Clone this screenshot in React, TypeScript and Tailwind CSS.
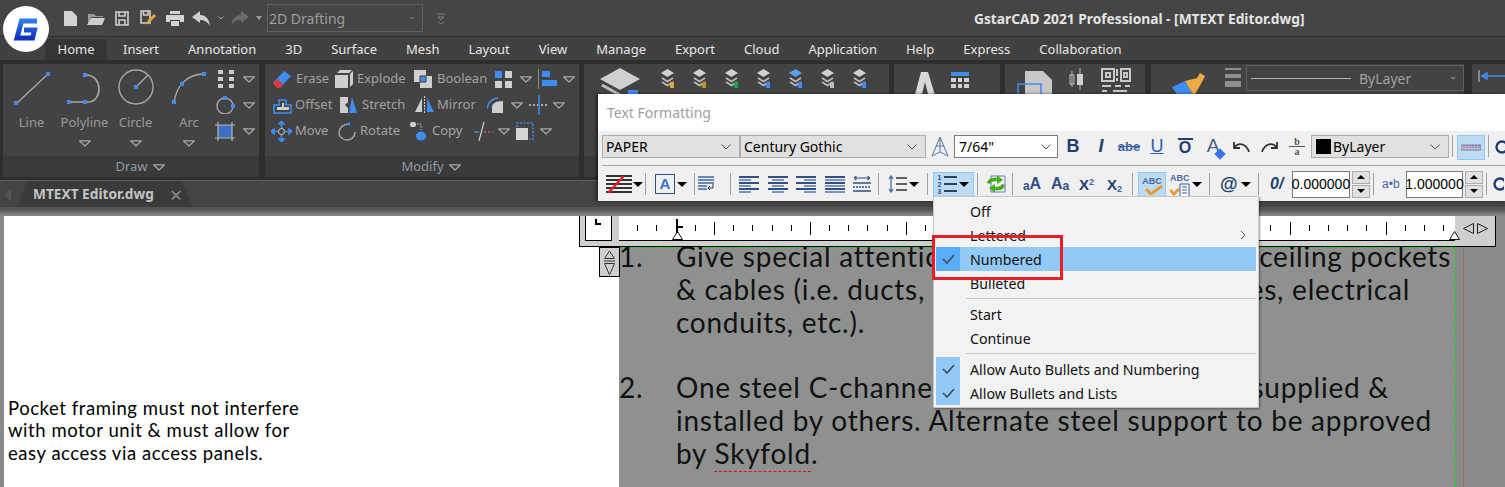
import type { ReactNode } from "react";

const uiFont = "font-['Noto_Sans',sans-serif]";
const gothic = "font-['Lato',sans-serif]";

const RIBBON_TABS = [
  "Insert",
  "Annotation",
  "3D",
  "Surface",
  "Mesh",
  "Layout",
  "View",
  "Manage",
  "Export",
  "Cloud",
  "Application",
  "Help",
  "Express",
  "Collaboration",
];

function Ico({ w, h, children, className = "" }: { w: number; h: number; children: ReactNode; className?: string }) {
  return (
    <svg width={w} height={h} viewBox={`0 0 ${w} ${h}`} className={`shrink-0 ${className}`} fill="none">
      {children}
    </svg>
  );
}

function Chev({ className = "" }: { className?: string }) {
  return (
    <Ico w={12} h={7} className={className}>
      <path d="M0.5 0.8H11.5L6 6Z" stroke="#a8a8a8" strokeWidth="1.2" strokeLinejoin="round" />
    </Ico>
  );
}

function Caret() {
  return (
    <div className="flex w-[10px] shrink-0 justify-center">
      <div className="h-0 w-0 border-x-[5px] border-t-[5px] border-x-transparent border-t-black" />
    </div>
  );
}

function Sep() {
  return <div className="h-[22px] w-px shrink-0 bg-[#a0a0a0]" />;
}

function Dot({ x, y }: { x: number; y: number }) {
  return <rect x={x - 2} y={y - 2} width="4" height="4" fill="#3f8cf2" />;
}

// toolbar icon that runs off the right edge of the window
function CutIcon({ className }: { className: string }) {
  return (
    <Ico w={12} h={16} className={className}>
      <circle cx="8" cy="8" r="5.5" stroke="#1f3f70" strokeWidth="2.4" />
    </Ico>
  );
}

function Logo() {
  return (
    <div className="absolute left-[3px] top-[6px] flex h-[46px] w-[46px] items-center justify-center rounded-full bg-white">
      <Ico w={26} h={25}>
        <defs>
          <linearGradient id="logo" x1="0" y1="0" x2="0" y2="1">
            <stop offset="0" stopColor="#2f7bea" />
            <stop offset="1" stopColor="#1230c4" />
          </linearGradient>
        </defs>
        <path d="M24 4H8.5L4 21H19.5L21.5 13H11" stroke="url(#logo)" strokeWidth="5" />
      </Ico>
    </div>
  );
}

function QuickAccess() {
  return (
    <div className="flex h-full items-center pl-[64px]">
      <Ico w={13} h={15}>
        <path d="M0 0H8L13 5V15H0Z" fill="#d2d2d2" />
      </Ico>
      <Ico w={18} h={13} className="ml-[10px]">
        <path d="M1 2H7L9 4H16V5H4L1 12Z" fill="#9a9a9a" />
        <path d="M4 6H18L15 13H0Z" fill="#cfcfcf" />
      </Ico>
      <Ico w={14} h={15} className="ml-[10px]">
        <path d="M1 1H13V14H1Z M4 1V5H10V1 M4 14V9H10V14" stroke="#cfcfcf" strokeWidth="1.6" />
      </Ico>
      <Ico w={17} h={17} className="ml-[11px]">
        <path d="M1 1H10V13H1Z M3.5 1V5H8V1" stroke="#cfcfcf" strokeWidth="1.6" />
        <path d="M6 15L8 10L14 4L16 6L10 12Z" fill="#f0a63a" />
      </Ico>
      <Ico w={18} h={15} className="ml-[9px]">
        <path d="M4 0H14V3H4Z M0 4H18V11H14V9H4V11H0Z M5 10H13V15H5Z" fill="#d2d2d2" />
      </Ico>
      <Ico w={18} h={15} className="ml-[8px]">
        <path d="M0 6L8 0V4C14 4 17 8 18 15C15 10 12 9 8 9V12Z" fill="#cfcfcf" />
      </Ico>
      <Ico w={6} h={4} className="ml-[8px]">
        <path d="M0.5 0.5L3 3L5.5 0.5" stroke="#a0a0a0" />
      </Ico>
      <Ico w={18} h={15} className="ml-[7px]">
        <path d="M18 6L10 0V4C4 4 1 8 0 15C3 10 6 9 10 9V12Z" fill="#6a6a6a" />
      </Ico>
      <Ico w={6} h={4} className="ml-[7px]">
        <path d="M0 0H6L3 4Z" fill="#a0a0a0" />
      </Ico>
      <div className="ml-[5px] flex h-[28px] w-[156px] items-center justify-between border border-[#5f5f5f] pl-[1px] pr-[7px] text-[14px] text-[#9d9d9d]">
        <span>2D Drafting</span>
        <div className="h-0 w-0 border-x-[3px] border-t-[3px] border-x-transparent border-t-[#666]" />
      </div>
      <Ico w={8} h={11} className="ml-[14px]">
        <path d="M0 1H8 M1 4H7L4 7Z M1 9L4 11L7 9" stroke="#808080" />
      </Ico>
    </div>
  );
}

function Panel({ className, label, children }: { className: string; label?: ReactNode; children?: ReactNode }) {
  return (
    <div className={`flex h-[113px] shrink-0 flex-col overflow-hidden bg-[#434343] ${className}`}>
      <div className="flex-1">{children}</div>
      <div className="flex h-[21px] items-center justify-center gap-[5px] bg-[#3a3a3a] pl-[18px] pt-px text-[13px] text-[#8f9aa3]">
        {label}
      </div>
    </div>
  );
}

function DrawPanel() {
  return (
    <Panel
      className="ml-[3px] w-[256px]"
      label={
        <>
          Draw
          <Chev />
        </>
      }
    >
      <div className="flex">
        <div className="grid w-[212px] grid-cols-4 text-center text-[13px] leading-[19px] text-[#9a9a9a]">
          <div className="flex flex-col items-center pl-[4px]">
            <Ico w={38} h={34} className="mt-[7px]">
              <path d="M4 32L35 3" stroke="#a8a8a8" strokeWidth="1.4" />
              <Dot x={3} y={32} />
              <Dot x={35} y={3} />
            </Ico>
            <span className="mt-[8px]">Line</span>
          </div>
          <div className="flex flex-col items-center pl-[4px]">
            <Ico w={38} h={34} className="mt-[7px]">
              <path d="M2 31H22C37 31 37 4 20 4" stroke="#a8a8a8" strokeWidth="1.6" />
              <Dot x={3} y={31} />
              <Dot x={19} y={31} />
              <Dot x={19} y={4} />
            </Ico>
            <span className="mt-[8px]">Polyline</span>
            <Chev className="mt-[8px]" />
          </div>
          <div className="flex flex-col items-center">
            <Ico w={38} h={36} className="mt-[5px]">
              <circle cx="19" cy="18" r="17" stroke="#a8a8a8" strokeWidth="1.4" />
              <path d="M19 18L31 6" stroke="#a8a8a8" strokeWidth="1.4" />
              <Dot x={19} y={18} />
            </Ico>
            <span className="mt-[8px]">Circle</span>
            <Chev className="mt-[8px]" />
          </div>
          <div className="flex flex-col items-center pl-[1px]">
            <Ico w={36} h={34} className="mt-[7px]">
              <path d="M3 32C5 15 16 3 33 3" stroke="#a8a8a8" strokeWidth="1.4" />
              <Dot x={3} y={31} />
              <Dot x={11} y={13} />
              <Dot x={33} y={3} />
            </Ico>
            <span className="mt-[8px]">Arc</span>
            <Chev className="mt-[8px]" />
          </div>
        </div>
        <div className="mt-[6px] flex flex-col gap-[8px]">
          <div className="flex items-center gap-[8px]">
            <Ico w={20} h={18}>
              <path d="M3 0h5v4H3z M14 0h5v4h-5z M3 7h5v4H3z M14 7h5v4h-5z M3 14h5v4H3z M14 14h5v4h-5z" fill="#cdcdcd" />
            </Ico>
            <Chev />
          </div>
          <div className="flex items-center gap-[8px]">
            <Ico w={20} h={18}>
              <circle cx="10" cy="10" r="8" stroke="#a8a8a8" strokeWidth="1.4" />
              <Dot x={10} y={2} />
              <Dot x={18} y={10} />
              <rect x="9.5" y="9.5" width="1" height="1" fill="#3f8cf2" />
            </Ico>
            <Chev />
          </div>
          <div className="flex items-center gap-[8px]">
            <Ico w={20} h={19}>
              <rect x="3" y="3" width="14" height="13" fill="#3b6fc4" />
              <path d="M0 3H20 M0 16H20 M3 0V19 M17 0V19" stroke="#b5b5b5" strokeWidth="1.2" />
            </Ico>
            <Chev />
          </div>
        </div>
      </div>
    </Panel>
  );
}

function Tool({ icon, label, className }: { icon: ReactNode; label: string; className: string }) {
  return (
    <div className={`flex items-center ${className}`}>
      {icon}
      <span>{label}</span>
    </div>
  );
}

function ModifyPanel() {
  return (
    <Panel
      className="ml-[6px] w-[314px]"
      label={
        <>
          Modify
          <Chev />
        </>
      }
    >
      <div className="flex flex-col text-[13px] text-[#a2a2a2]">
        <div className="mt-[2px] flex h-[26px] items-center pl-[8px]">
          <Tool
            className="w-[62px] gap-[5px]"
            label="Erase"
            icon={
              <Ico w={18} h={17}>
                <path d="M0 12L11 0L18 5L7 17Z" fill="#3f8cf2" />
                <path d="M0 12L4 8L10 13L7 17H4Z" fill="#d83a3a" />
              </Ico>
            }
          />
          <Tool
            className="w-[79px] gap-[4px]"
            label="Explode"
            icon={
              <Ico w={18} h={18}>
                <path d="M0 5H13V18H0Z M15 4L18 1V14L15 17Z M2 3L5 0H17L14 3Z" fill="#cfcfcf" />
              </Ico>
            }
          />
          <Tool
            className="w-[81px] gap-[5px]"
            label="Boolean"
            icon={
              <Ico w={18} h={18}>
                <path d="M0 0H12V12H0Z M6 6H18V18H6Z" fill="#cfcfcf" />
                <path d="M6 6H12V12H6Z" fill="#3f8cf2" stroke="#3a3a3a" />
              </Ico>
            }
          />
          <Ico w={17} h={17}>
            <path d="M0 0H7V7H0Z" fill="#3f8cf2" />
            <path d="M10 0H17V7H10Z M0 10H7V17H0Z M10 10H17V17H10Z" fill="#cfcfcf" />
          </Ico>
          <Chev className="ml-[8px]" />
          <div className="ml-[6px] h-[20px] w-px bg-[#888]" />
          <Ico w={15} h={16} className="ml-[3px]">
            <path d="M0 0H8V6H0Z M0 9H15V15H0Z" fill="#3f8cf2" />
          </Ico>
          <Chev className="ml-[6px]" />
        </div>
        <div className="flex h-[26px] items-center pl-[8px]">
          <Tool
            className="w-[67px] gap-[3px]"
            label="Offset"
            icon={
              <Ico w={19} h={18}>
                <path d="M1 17V9H6V4H13V9H18V17Z" stroke="#3f8cf2" strokeWidth="1.6" />
                <path d="M4 14V11H9V7H11V11H16V14Z" fill="#cfcfcf" />
              </Ico>
            }
          />
          <Tool
            className="w-[75px] gap-[5px]"
            label="Stretch"
            icon={
              <Ico w={17} h={16}>
                <path d="M0 0H8V5L5 8L8 11V16H0Z" fill="#cfcfcf" />
                <path d="M12 0L17 16H9Z" fill="#3f8cf2" />
              </Ico>
            }
          />
          <Tool
            className="w-[72px] gap-[3px]"
            label="Mirror"
            icon={
              <Ico w={19} h={18}>
                <path d="M7 2L0 16H7Z" fill="#cfcfcf" />
                <path d="M12 2L19 16H12Z" fill="#3f8cf2" />
                <path d="M9.5 0V18" stroke="#cfcfcf" strokeDasharray="2 1" />
              </Ico>
            }
          />
          <Ico w={16} h={16}>
            <path d="M5 16V10C5 7 8 4 16 4V16Z" fill="#cfcfcf" />
            <path d="M0 12C1 5 6 1 11 1" stroke="#3f8cf2" strokeWidth="1.6" />
          </Ico>
          <Chev className="ml-[8px]" />
          <Ico w={20} h={20} className="ml-[6px]">
            <path d="M0 10H20" stroke="#cfcfcf" strokeDasharray="2 2" strokeWidth="1.5" />
            <path d="M10 0V20" stroke="#3f8cf2" strokeWidth="1.5" />
          </Ico>
          <Chev className="ml-[4px]" />
        </div>
        <div className="flex h-[26px] items-center pl-[6px]">
          <Tool
            className="w-[67px] gap-[3px]"
            label="Move"
            icon={
              <Ico w={21} h={21}>
                <path d="M0 10.5H21 M10.5 0V21 M0 10.5L3 8V13Z M21 10.5L18 8V13Z M10.5 0L8 3H13Z M10.5 21L8 18H13Z" stroke="#3f8cf2" strokeWidth="1.5" />
                <circle cx="10.5" cy="10.5" r="3" fill="#434343" stroke="#cfcfcf" />
              </Ico>
            }
          />
          <Tool
            className="w-[72px] gap-[4px]"
            label="Rotate"
            icon={
              <Ico w={18} h={19}>
                <path d="M11 2C5 2 1 6 1 11C1 15 5 18 9 18C13 18 17 15 17 10" stroke="#a8a8a8" strokeWidth="1.4" />
                <path d="M8 2L12 0V4Z" fill="#3f8cf2" />
              </Ico>
            }
          />
          <Tool
            className="w-[64px] gap-[6px]"
            label="Copy"
            icon={
              <Ico w={16} h={19}>
                <rect x="0" y="0" width="6" height="5" rx="2" fill="#cfcfcf" />
                <ellipse cx="11" cy="14" rx="5" ry="4.5" fill="#3f8cf2" />
                <path d="M7 2H11V8" stroke="#cfcfcf" strokeDasharray="1.5 1.5" />
              </Ico>
            }
          />
          <Ico w={19} h={19}>
            <path d="M0 10H5" stroke="#3f8cf2" strokeWidth="1.4" />
            <path d="M5 19L10 0" stroke="#cfcfcf" strokeWidth="1.2" />
            <path d="M10 10H19" stroke="#e05a5a" strokeDasharray="2 2" strokeWidth="1.4" />
          </Ico>
          <Chev className="ml-[5px]" />
          <Ico w={18} h={18} className="ml-[6px]">
            <path d="M0 6H12V18H0Z" fill="#d6d6d6" />
            <path d="M1 5V1H17V17H13" stroke="#3f8cf2" strokeWidth="1.5" strokeDasharray="2 1.5" />
          </Ico>
          <Chev className="ml-[6px]" />
        </div>
      </div>
    </Panel>
  );
}

function LayerIcon({ color, top = "#d0d0d0" }: { color: string; top?: string }) {
  return (
    <Ico w={15} h={22}>
      <path d="M7.5 1L14 5L7.5 9L1 5Z" fill={top} />
      <path d="M2 10L7.5 13.5L13 10 M2 14L7.5 17.5L13 14" stroke="#bdbdbd" strokeWidth="1.6" />
      <rect x="10" y="14" width="4" height="6" fill={color} />
    </Ico>
  );
}

function RibbonTail() {
  return (
    <>
      <Panel className="ml-[5px] w-[305px]">
        <div className="flex items-start">
          <Ico w={42} h={30} className="ml-[16px] mt-[4px]">
            <path d="M20 0L40 11L20 22L0 11Z" fill="#d0d0d0" />
            <path d="M2 17L20 27" stroke="#bdbdbd" strokeWidth="3" />
            <rect x="28" y="22" width="10" height="8" fill="#3f8cf2" />
          </Ico>
          <div className="ml-[18px] mt-[4px] flex gap-[17px]">
            <LayerIcon color="#e8a33a" />
            <LayerIcon color="#c88a30" />
            <LayerIcon color="#25a04a" />
            <LayerIcon color="#3f8cf2" />
            <LayerIcon color="#3f8cf2" top="#5aa0f5" />
            <LayerIcon color="#bdbdbd" />
            <LayerIcon color="#3f8cf2" />
          </div>
        </div>
      </Panel>
      <Panel className="ml-[5px] w-[106px]">
        <div className="flex">
          <Ico w={24} h={30} className="ml-[19px] mt-[8px]">
            <path d="M8 0H15L24 30H17L12 10L7 30H0Z" fill="#d8d8d8" />
          </Ico>
          <Ico w={18} h={16} className="ml-[14px] mt-[8px]">
            <path d="M0 0H18V4H0Z" fill="#3f8cf2" />
            <path d="M0 6h5v4H0z M7 6h4v4H7z M13 6h5v4h-5z M0 12h5v4H0z M7 12h4v4H7z M13 12h5v4h-5z" fill="#d0d0d0" />
          </Ico>
        </div>
      </Panel>
      <Panel className="ml-[5px] w-[140px]">
        <div className="flex">
          <Ico w={36} h={30} className="ml-[12px] mt-[7px]">
            <path d="M8 0H26L35 9V30H8Z" fill="#c8c8c8" />
            <path d="M1 13H24V30H1Z" stroke="#3f8cf2" strokeWidth="1.5" />
          </Ico>
          <Ico w={14} h={22} className="ml-[16px] mt-[4px]">
            <path d="M3 3V19 M11 0V22" stroke="#c0c0c0" />
            <rect x="1" y="7" width="4" height="9" stroke="#c0c0c0" />
            <rect x="8" y="6" width="6" height="11" fill="#d0d0d0" />
          </Ico>
          <Ico w={30} h={30} className="ml-[18px] mt-[4px]">
            <path d="M1 1H13V13H1Z M20 1H29V13H20Z" stroke="#c8c8c8" strokeWidth="2" />
            <path d="M5 5H9V9H5Z M23 5H26V9H23Z M16 1V8 M16 10V13" stroke="#c8c8c8" strokeWidth="2" />
            <path d="M1 18H10 M14 18H20 M24 18H29 M1 23H6 M12 23H26" stroke="#c8c8c8" strokeWidth="2" />
          </Ico>
        </div>
      </Panel>
      <Panel className="ml-[6px] w-[313px]">
        <div className="flex">
          <Ico w={34} h={28} className="ml-[21px] mt-[8px]">
            <path d="M0 15L13 9L22 24H6Z" fill="#3f8cf2" />
            <path d="M13 9L25 6L28 1L33 4L30 10L22 24Z" fill="#eeaa44" />
          </Ico>
          <Ico w={16} h={20} className="ml-[19px] mt-[4px]">
            <path d="M0 0H16V2H0Z M0 6H16V10H0Z M0 13H16V19H0Z" fill="#8f8f8f" />
          </Ico>
          <div className="ml-[5px] mt-[1px] flex h-[26px] w-[219px] items-center border border-[#5f5f5f] pl-[4px] pr-[7px] text-[14px] text-[#a0a0a0]">
            <div className="h-px w-[100px] bg-[#b5b5b5]" />
            <span className="ml-[8px] flex-1">ByLayer</span>
            <div className="h-0 w-0 border-x-[3px] border-t-[3px] border-x-transparent border-t-[#777]" />
          </div>
        </div>
      </Panel>
      <Panel className="ml-[8px] w-[40px]">
        <Ico w={28} h={12} className="ml-[6px] mt-[6px]">
          <path d="M1 0V12" stroke="#cfcfcf" />
          <path d="M4 6H28 M4 6L9 3V9Z" stroke="#3f8cf2" strokeWidth="1.5" />
        </Ico>
      </Panel>
    </>
  );
}

function Combo({ className, children }: { className: string; children: ReactNode }) {
  return (
    <div className={`flex h-[23px] shrink-0 items-center border border-[#adadad] bg-[#e1e1e1] pl-[3px] pr-[8px] text-[14px] text-black ${className}`}>
      <span className="flex flex-1 items-center">{children}</span>
      <Ico w={10} h={6}>
        <path d="M0.5 0.5L5 5L9.5 0.5" stroke="#555" />
      </Ico>
    </div>
  );
}

function Spin({ className }: { className: string }) {
  return (
    <div className={`flex h-[27px] flex-col gap-px ${className}`}>
      {[0, 1].map((i) => (
        <div key={i} className="flex flex-1 items-center justify-center border border-[#adadad] bg-[#e1e1e1]">
          {i === 0 ? (
            <div className="h-0 w-0 border-x-[4px] border-b-[4px] border-x-transparent border-b-black" />
          ) : (
            <div className="h-0 w-0 border-x-[4px] border-t-[4px] border-x-transparent border-t-black" />
          )}
        </div>
      ))}
    </div>
  );
}

function TextBtn({ className = "", children }: { className?: string; children: ReactNode }) {
  return <div className={`flex h-[23px] w-[28px] shrink-0 items-center justify-center font-['Liberation_Sans',sans-serif] text-[#1f3f70] ${className}`}>{children}</div>;
}

function AlignIcon({ pattern }: { pattern: "l" | "c" | "r" | "j" }) {
  const rows = [20, 12, 20, 12, 20, 12];
  return (
    <div className={`flex w-[20px] flex-col gap-[1px] ${pattern === "l" ? "items-start" : pattern === "r" ? "items-end" : "items-center"}`}>
      {rows.map((w, i) => (
        <div key={i} className={`h-[2px] ${i % 2 === 0 ? "bg-[#2f4f85]" : "bg-[#7a93c4]"}`} style={{ width: pattern === "j" ? 20 : w }} />
      ))}
    </div>
  );
}

function TextToolbar() {
  return (
    <div className={`absolute left-[598px] top-[94px] h-[107px] w-[907px] overflow-hidden bg-[#f0f0f0] shadow-[-2px_0_3px_rgba(0,0,0,0.5)] ${uiFont}`}>
      <div className="flex h-[37px] items-center bg-white pl-[9px] text-[14px] text-[#9e9e9e]">Text Formatting</div>
      <div className="flex h-[34px] items-start pl-[4px] pt-[4px]">
        <Combo className="w-[138px]">PAPER</Combo>
        <Combo className="w-[186px]">Century Gothic</Combo>
        <div className="flex h-[23px] w-[28px] shrink-0 items-center justify-center">
          <Ico w={18} h={20}>
            <path d="M9 0L1 19L9 15L17 19Z M9 0V15 M5 9H13" stroke="#5872a8" />
          </Ico>
        </div>
        <div className="flex h-[23px] w-[104px] shrink-0 items-center justify-between border border-[#7a7a7a] bg-white pl-[4px] pr-[6px] text-[14px] text-black">
          7/64"
          <Ico w={10} h={6}>
            <path d="M0.5 0.5L5 5L9.5 0.5" stroke="#555" />
          </Ico>
        </div>
        <TextBtn className="ml-px text-[18px] font-bold">B</TextBtn>
        <TextBtn className="text-[18px] font-bold italic">I</TextBtn>
        <TextBtn className="text-[13px] font-bold text-[#3f64a8] line-through">abe</TextBtn>
        <TextBtn className="text-[18px] text-[#2f5bb0] underline">U</TextBtn>
        <TextBtn className="flex-col text-[16px] font-bold leading-[15px]">
          <span className="h-[2px] w-[15px] bg-[#1f3f70]" />
          <span>O</span>
        </TextBtn>
        <TextBtn className="text-[19px] text-[#4a5f80]">
          <span className="relative">
            A
            <span className="absolute bottom-[3px] right-[-5px] h-[8px] w-[8px] rotate-45 bg-[#3b6ff0]" />
          </span>
        </TextBtn>
        <TextBtn>
          <Ico w={17} h={12}>
            <path d="M1 1V7H7 M1 7C5 1 13 2 16 11" stroke="#333" strokeWidth="1.8" />
          </Ico>
        </TextBtn>
        <TextBtn>
          <Ico w={17} h={12}>
            <path d="M16 1V7H10 M16 7C12 1 4 2 1 11" stroke="#333" strokeWidth="1.8" />
          </Ico>
        </TextBtn>
        <div className="flex h-[23px] w-[28px] shrink-0 flex-col items-center justify-center font-['Liberation_Serif',serif] text-[10px] font-bold leading-[9px] text-[#555]">
          <span>b</span>
          <span className="h-px w-[16px] bg-[#555]" />
          <span>a</span>
        </div>
        <Combo className="w-[138px]">
          <span className="mr-[2px] ml-[1px] h-[15px] w-[15px] bg-black" />
          ByLayer
        </Combo>
        <div className="ml-[3px] h-[22px] w-px shrink-0 bg-[#a0a0a0]" />
        <div className="ml-[4px] flex h-[25px] w-[28px] shrink-0 items-center justify-center border border-[#90c8f6] bg-[#bcdcf4]">
          <Ico w={20} h={7}>
            <path d="M0 1H20V6H0Z" fill="#d8b8c0" stroke="#6a7ab8" />
            <path d="M3 1V4 M6 1V4 M9 1V4 M12 1V4 M15 1V4 M18 1V4" stroke="#6a7ab8" />
          </Ico>
        </div>
        <div className="ml-[3px] h-[22px] w-px shrink-0 bg-[#a0a0a0]" />
        <CutIcon className="ml-[5px] mt-[4px]" />
      </div>
      <div className="ml-[4px] h-px bg-[#a8a8a8]" />
      <div className="flex h-[35px] items-center pl-[4px] pt-[1px] font-['Liberation_Sans',sans-serif]">
        <div className="relative ml-[3px] flex w-[28px] shrink-0 justify-center">
          <Ico w={26} h={18}>
            <path d="M0 1H26 M0 5H26 M0 9H26 M0 13H26 M0 17H26" stroke="#333" strokeWidth="2" />
            <path d="M2 18L18 1" stroke="#ee1c25" strokeWidth="2.5" />
          </Ico>
        </div>
        <Caret />
        <div className="ml-[2px] shrink-0"><Sep /></div>
        <div className="ml-[9px] flex h-[20px] w-[20px] shrink-0 items-center justify-center border border-[#2f4f85] text-[15px] font-bold text-[#3b6fd6]">A</div>
        <div className="ml-[2px] shrink-0"><Caret /></div>
        <div className="ml-[7px] shrink-0"><Sep /></div>
        <div className="ml-px flex w-[20px] shrink-0 justify-center">
          <Ico w={17} h={16}>
            <path d="M0 1H16 M0 4H16 M0 7H16 M0 10H9 M0 13H9" stroke="#3f64a8" strokeWidth="1.6" />
            <path d="M15 8V12H10 M12 10L10 12L12 14" stroke="#333" />
          </Ico>
        </div>
        <div className="ml-[14px] shrink-0"><Sep /></div>
        <div className="ml-[8px] flex w-[137px] shrink-0 items-center justify-between pr-[5px]">
          <AlignIcon pattern="l" />
          <AlignIcon pattern="c" />
          <AlignIcon pattern="r" />
          <AlignIcon pattern="j" />
          <Ico w={18} h={17}>
            <path d="M1 2H17 M1 2L3 0V4Z M17 2L15 0V4Z" stroke="#2f4f85" />
            <path d="M0 7H18 M0 15H18" stroke="#2f4f85" strokeWidth="1.6" />
            <path d="M0 11H18" stroke="#2f4f85" strokeWidth="1.6" strokeDasharray="2 1" />
          </Ico>
        </div>
        <div className="ml-[2px] shrink-0"><Sep /></div>
        <div className="ml-[8px] flex w-[20px] shrink-0 justify-center">
          <Ico w={19} h={18}>
            <path d="M3 1V17 M1 4L3 1L5 4 M1 14L3 17L5 14" stroke="#3f64a8" strokeWidth="1.2" />
            <path d="M8 3H19 M8 9H19 M8 15H19" stroke="#333" strokeWidth="1.6" />
          </Ico>
        </div>
        <div className="ml-[2px] shrink-0"><Caret /></div>
        <div className="ml-[8px] shrink-0"><Sep /></div>
        <div className="ml-[5px] flex h-[25px] w-[41px] shrink-0 items-center justify-center gap-[2px] border border-[#90c8f6] bg-[#bcdcf4]">
          <div className="flex flex-col text-[7px] font-bold leading-[7px] text-[#2f4f85]">
            <span>1</span>
            <span>2</span>
            <span>3</span>
          </div>
          <Ico w={14} h={18}>
            <path d="M1 2H14 M1 9H14 M1 16H14" stroke="#2b3f5f" strokeWidth="1.8" />
          </Ico>
          <Caret />
        </div>
        <div className="ml-[3px] shrink-0"><Sep /></div>
        <div className="ml-[8px] flex w-[20px] shrink-0 justify-center">
          <Ico w={20} h={18}>
            <path d="M5 1H19V17H5Z" stroke="#6a7ab8" />
            <path d="M1 8C2 3 7 2 11 3V0L17 5L11 9V6C7 6 5 7 4 9Z M19 10C18 15 13 16 9 15V18L3 13L9 9V12C13 12 15 11 16 9Z" fill="#4aab22" />
          </Ico>
        </div>
        <div className="ml-[6px] shrink-0"><Sep /></div>
        <div className="ml-[9px] flex w-[20px] shrink-0 items-end justify-center font-bold leading-none text-[#2f4f85]">
          <span className="text-[12px]">a</span>
          <span className="text-[16px]">A</span>
        </div>
        <div className="ml-[8px] flex w-[20px] shrink-0 items-end justify-center font-bold leading-none text-[#2f4f85]">
          <span className="text-[16px]">A</span>
          <span className="text-[12px]">a</span>
        </div>
        <div className="ml-[9px] w-[19px] shrink-0 text-[15px] font-bold leading-none text-[#1f3f70]">
          X<sup className="text-[9px] text-[#3f64a8]">2</sup>
        </div>
        <div className="ml-[9px] w-[19px] shrink-0 text-[15px] font-bold leading-none text-[#1f3f70]">
          X<sub className="text-[9px] text-[#3f64a8]">2</sub>
        </div>
        <div className="ml-[6px] shrink-0"><Sep /></div>
        <div className="relative ml-[5px] flex h-[25px] w-[28px] shrink-0 justify-center border border-[#90c8f6] bg-[#bcdcf4] pt-[2px] text-[9px] font-bold text-[#4a66a0]">
          ABC
          <Ico w={18} h={11} className="absolute bottom-[1px] left-[6px]">
            <path d="M1 5L6 10L17 2" stroke="#ea9a2c" strokeWidth="3" />
          </Ico>
        </div>
        <div className="relative ml-[4px] flex h-[25px] w-[20px] shrink-0 text-[9px] font-bold text-[#4a66a0]">
          ABC
          <Ico w={20} h={14} className="absolute bottom-0 left-0">
            <path d="M0 7L4 11L9 6" stroke="#ea9a2c" strokeWidth="3" />
            <path d="M10 1H19V14H10Z" fill="#fff" stroke="#2f5bb0" />
            <path d="M12 4H17 M12 7H17 M12 10H17" stroke="#2f5bb0" />
          </Ico>
        </div>
        <div className="ml-[2px] shrink-0"><Caret /></div>
        <div className="ml-[7px] shrink-0"><Sep /></div>
        <div className="ml-[10px] w-[18px] shrink-0 text-[18px] font-bold leading-none text-[#1f3f70]">@</div>
        <div className="ml-[3px] shrink-0"><Caret /></div>
        <div className="ml-[7px] shrink-0"><Sep /></div>
        <div className="ml-[11px] w-[15px] shrink-0 text-[16px] font-bold italic leading-none text-[#1f3f70]">0/</div>
        <div className="ml-[7px] flex h-[27px] w-[58px] shrink-0 items-center justify-center border border-[#7a7a7a] bg-white text-[14px] text-black">0.000000</div>
        <Spin className="ml-[2px] w-[18px] shrink-0" />
        <div className="ml-[3px] shrink-0"><Sep /></div>
        <div className="ml-[8px] w-[20px] shrink-0 text-[12px] text-[#4a66a0]">a•b</div>
        <div className="ml-[4px] flex h-[27px] w-[57px] shrink-0 items-center justify-center border border-[#7a7a7a] bg-white text-[14px] text-black">1.000000</div>
        <Spin className="ml-[2px] w-[18px] shrink-0" />
        <div className="ml-[3px] shrink-0"><Sep /></div>
        <CutIcon className="ml-[5px]" />
      </div>
    </div>
  );
}

function IndentMark({ className }: { className: string }) {
  return (
    <Ico w={11} h={9} className={`absolute bottom-0 ${className}`}>
      <path d="M5.5 0.5L10.5 8.5H0.5Z" fill="#fff" stroke="#111" />
    </Ico>
  );
}

function Ruler() {
  const ticks = Array.from({ length: 43 }, (_, i) => i + 1);
  return (
    <div className="absolute left-[579px] top-[216px] flex h-[31px] w-[917px] border-b border-l border-r border-black bg-[#cfcfcf]">
      <div className="ml-[5px] h-[25px] w-[27px] border border-t-0 border-black bg-white pl-[9px] pt-[3px]">
        <div className="h-[6px] w-[6px] border-b-2 border-l-2 border-black" />
      </div>
      <div className="relative ml-[7px] flex h-[25px] w-[836px] items-center border-b border-black bg-white">
        {ticks.map((t) => (
          <div key={t} className="flex w-[19.2px] shrink-0 justify-end">
            <div className={`w-px bg-black ${t % 5 === 0 ? "h-[13px]" : "h-[6px]"}`} />
          </div>
        ))}
        <IndentMark className="left-[53px]" />
        <div className="absolute left-[57px] top-[3px] h-[14px] w-[2px] bg-black" />
        <div className="absolute left-[58px] top-[10px] h-[2px] w-[6px] bg-black" />
        <IndentMark className="right-[-5px]" />
      </div>
      <div className="flex flex-1 items-center justify-center gap-[3px] pb-[6px]">
        <Ico w={11} h={11}>
          <path d="M10.5 0.5V10.5L0.5 5.5Z" stroke="#222" />
        </Ico>
        <Ico w={11} h={11}>
          <path d="M0.5 0.5V10.5L10.5 5.5Z" stroke="#222" />
        </Ico>
      </div>
    </div>
  );
}

function RulerSpinner() {
  return (
    <div className="absolute left-[599px] top-[247px] flex h-[30px] w-[21px] flex-col items-center border border-black bg-[#cfcfcf] pt-[2px]">
      <Ico w={13} h={26}>
        <path d="M1.5 8.5L6.5 1L11.5 8.5Z M1 11H12 M1.5 13.5H11.5L6.5 25Z" stroke="#333" />
      </Ico>
    </div>
  );
}

function MenuRow({ label, mark, wide, fill, sub }: { label: string; mark?: boolean; wide?: boolean; fill?: string; sub?: boolean }) {
  return (
    <div className={`flex h-[24px] items-center ${wide ? "bg-[#91c9f7]" : ""}`}>
      <div className={`flex h-full w-[24px] items-center justify-center ${mark ? fill ?? "bg-[#91c9f7]" : ""}`}>
        {mark && (
          <Ico w={13} h={10}>
            <path d="M1 5L5 9L12 1" stroke="#3f4a55" strokeWidth="1.6" />
          </Ico>
        )}
      </div>
      <span className="ml-[10px] flex-1 pt-[2px]">{label}</span>
      {sub && (
        <Ico w={6} h={10} className="mr-[10px]">
          <path d="M1 1L5 5L1 9" stroke="#555" />
        </Ico>
      )}
    </div>
  );
}

function MenuSep() {
  return (
    <div className="flex h-[7px] items-center pl-[30px]">
      <div className="h-px flex-1 bg-[#c8c8c8]" />
    </div>
  );
}

function NumberingMenu() {
  return (
    <>
      <div className={`absolute left-[933px] top-[196px] h-[212px] w-[326px] border border-[#c8c8c8] bg-[#f2f2f2] p-[2px] text-[14.2px] text-[#111] shadow-[1px_1px_2px_rgba(0,0,0,0.4)] ${uiFont}`}>
        <MenuRow label="Off" />
        <MenuRow label="Lettered" sub />
        <MenuRow label="Numbered" mark wide fill="bg-[#59aefb]" />
        <MenuRow label="Bulleted" />
        <MenuSep />
        <MenuRow label="Start" />
        <MenuRow label="Continue" />
        <MenuSep />
        <MenuRow label="Allow Auto Bullets and Numbering" mark />
        <MenuRow label="Allow Bullets and Lists" mark />
      </div>
      <div className="absolute left-[932px] top-[235px] h-[45px] w-[131px] border-[3px] border-[#ed1c24]" />
    </>
  );
}

function EditorLine({ num, left, right, padRight }: { num?: string; left: ReactNode; right?: string; padRight?: string }) {
  return (
    <div className={`flex h-[33px] items-center ${padRight ?? ""}`}>
      <span className="w-[57px] shrink-0">{num}</span>
      <span className="flex-1 whitespace-nowrap">{left}</span>
      {right && <span className="whitespace-nowrap">{right}</span>}
    </div>
  );
}

function DrawingArea() {
  return (
    <div className="flex flex-1 overflow-hidden">
      <div className={`flex w-[619px] shrink-0 flex-col justify-end border-l-[4px] border-[#8a8a8a] bg-white pb-[23px] pl-[4px] text-[18.5px] leading-[22.5px] tracking-[0.55px] text-black ${gothic}`}>
        <div>Pocket framing must not interfere</div>
        <div>with motor unit &amp; must allow for</div>
        <div>easy access via access panels.</div>
      </div>
      <div className="flex flex-1 bg-[#8b8b8b] pt-[31px]">
        <div className={`h-full w-[837px] border-r border-t border-dashed border-r-[#00e000] border-t-[#00e000] bg-[#8f9190] text-[28px] tracking-[0.75px] text-[#111] ${gothic}`}>
          <div className="mt-[-9px]">
            <EditorLine num="1." left="Give special attention" right="ceiling pockets" padRight="pr-[4px]" />
            <EditorLine left="& cables (i.e. ducts," right="es, electrical" padRight="pr-[45px]" />
            <EditorLine left="conduits, etc.)." />
            <div className="h-[32px]" />
            <EditorLine num="2." left="One steel C-channel" right="supplied &" padRight="pr-[66px]" />
            <EditorLine left="installed by others. Alternate steel support to be approved" />
            <EditorLine
              left={
                <>
                  by <span className="border-b border-dashed border-[#e01010] pb-[1px]">Skyfold</span>.
                </>
              }
            />
          </div>
        </div>
        <div className="ml-[7px] w-px bg-[#8d7a6c]" />
      </div>
    </div>
  );
}

export default function App() {
  return (
    <div className={`relative flex h-[487px] w-[1505px] flex-col overflow-hidden bg-[#444] ${uiFont}`}>
      <div className="relative flex h-[37px] shrink-0 items-center border-b border-[#2f2f2f] bg-[#454545]">
        <QuickAccess />
        <span className="absolute left-[974px] top-[9px] text-[13.75px] font-bold text-[#e4e4e4]">
          GstarCAD 2021 Professional - [MTEXT Editor.dwg]
        </span>
      </div>
      <div className="flex h-[23px] shrink-0 items-end gap-[29px] bg-[#414141] pl-[45px] text-[13px] text-[#e6e6e6]">
        <div className="-mr-[13px] flex h-[21px] w-[62px] items-center justify-center rounded-t-[4px] bg-[#353535] pt-px">Home</div>
        {RIBBON_TABS.map((tab) => (
          <div key={tab} className="flex h-[21px] items-center pt-px">
            {tab}
          </div>
        ))}
      </div>
      <div className="flex h-[120px] shrink-0 items-start bg-[#2e2e2e] pt-[4px]">
        <DrawPanel />
        <ModifyPanel />
        <RibbonTail />
      </div>
      <div className="flex h-[36px] shrink-0 flex-col bg-[#444]">
        <div className="h-px bg-[#5c5c5c]" />
        <div className="flex h-[26px] items-end pl-[5px]">
          <div className="mb-[6px] h-0 w-0 border-y-[6px] border-r-[6px] border-y-transparent border-r-[#555]" />
          <div className="ml-[6px] flex h-[26px] w-[175px] items-center bg-[#3a3a3a] pl-[16px] text-[13.7px] font-bold text-[#c4c4c4] [clip-path:polygon(10px_0,165px_0,175px_100%,0_100%)]">
            MTEXT Editor.dwg
            <span className="ml-[16px] text-[22px] font-normal leading-none text-[#8a8a8a]">×</span>
          </div>
        </div>
        <div className="h-[3px] bg-[#555]" />
        <div className="h-[6px] bg-[linear-gradient(#5a5a5a,#8a8a8a)]" />
      </div>
      <DrawingArea />
      <TextToolbar />
      <Ruler />
      <RulerSpinner />
      <NumberingMenu />
      <Logo />
    </div>
  );
}
